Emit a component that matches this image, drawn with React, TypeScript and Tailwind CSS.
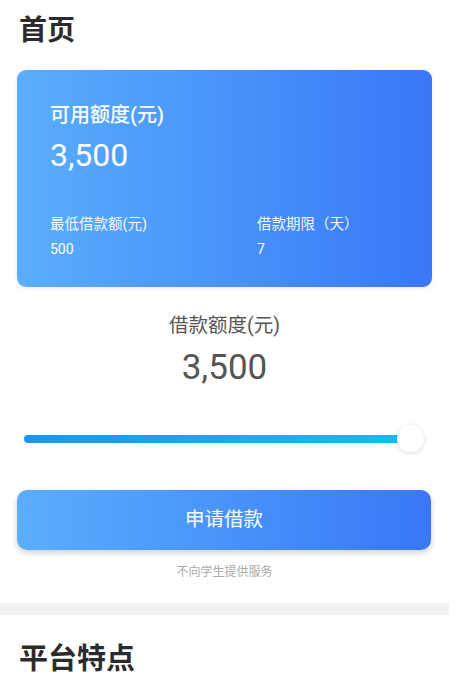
const font = "font-['Roboto','Noto_Sans_CJK_SC',sans-serif]";

function Stat({ label, value, className }: { label: string; value: string; className?: string }) {
  return (
    <div className={className}>
      <div className="text-[14.5px] leading-[20px] text-white/95">{label}</div>
      <div className="mt-[4px] text-[14px] leading-[20px] text-white">{value}</div>
    </div>
  );
}

export default function App() {
  return (
    <div className={`${font} w-[449px] bg-white min-h-screen`}>
      <h1 className="px-[19px] pt-[13px] text-[28px] leading-[36px] font-semibold text-[#2b2b2b]">首页</h1>

      <div className="mx-[17px] mt-[21px] h-[217px] rounded-[9px] bg-gradient-to-r from-[#5aaefc] to-[#3a77f7] pl-[33px] pr-[17px] pt-[31px] shadow-[0_1px_4px_rgba(60,120,240,0.15)]">
        <div className="text-[20px] leading-[28px] font-medium text-white">可用额度(元)</div>
        <div className="mt-[6px] text-[32px] leading-[40px] text-white">3,500</div>
        <div className="mt-[40px] flex">
          <Stat className="w-[207px]" label="最低借款额(元)" value="500" />
          <Stat className="flex-1" label="借款期限（天）" value="7" />
        </div>
      </div>

      <div className="mt-[25px] flex flex-col items-center">
        <div className="text-[19.5px] leading-[28px] text-[#555]">借款额度(元)</div>
        <div className="mt-[7px] text-[35px] leading-[42px] text-[#555]">3,500</div>
      </div>

      <div className="relative mx-[24px] mt-[36px] h-[27px] flex items-center">
        <div className="h-[8px] w-[386px] rounded-full bg-gradient-to-r from-[#1a95ee] to-[#0ac1f6]" />
        <div className="absolute left-[373px] top-0 h-[27px] w-[27px] rounded-full bg-white shadow-[0_1px_5px_rgba(0,0,0,0.15)]" />
      </div>

      <button className="mx-[17px] mt-[38px] flex h-[60px] w-[414px] items-center justify-center rounded-[10px] bg-gradient-to-r from-[#5aaefc] to-[#3a77f7] text-[19.5px] text-white shadow-[0_3px_6px_rgba(0,0,0,0.18)]">
        申请借款
      </button>

      <div className="mt-[13px] text-center text-[12px] leading-[18px] text-[#aaa]">不向学生提供服务</div>

      <div className="mt-[22px] h-[12px] bg-[#f2f2f2]" />

      <h2 className="px-[19px] pt-[26px] text-[29px] leading-[36px] font-semibold text-[#2b2b2b]">平台特点</h2>
    </div>
  );
}
